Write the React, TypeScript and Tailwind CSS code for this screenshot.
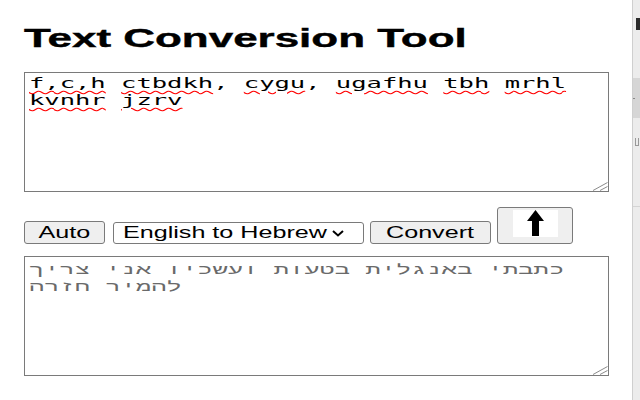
import React from "react";

const sans = "font-['Liberation_Sans',Arial,sans-serif]";

function Grip() {
  return (
    <svg className="absolute right-0 bottom-0" width="16" height="10" viewBox="0 0 16 10">
      <line x1="1" y1="9.5" x2="15.5" y2="1.5" stroke="#8a8a8a" strokeWidth="1" />
      <line x1="8" y1="9.5" x2="15.5" y2="5.5" stroke="#8a8a8a" strokeWidth="1" />
    </svg>
  );
}

function Word({ children }: { children: React.ReactNode }) {
  return (
    <span className="underline decoration-wavy decoration-[#ff0000] decoration-1 underline-offset-[2px]">
      {children}
    </span>
  );
}

export default function App() {
  return (
    <div className="flex h-[400px] w-[640px] overflow-hidden bg-white">
      <main className="w-[632px] pl-6">
        <h1 className={`mt-[25px] h-[26px] text-[26px] leading-[26px] font-bold text-black ${sans}`}>
          <span className="inline-block origin-left scale-x-[1.69] whitespace-nowrap [-webkit-text-stroke:0.4px_#000]">
            Text Conversion Tool
          </span>
        </h1>

        <div className="relative mt-[21px] h-[120px] w-[585px] border border-[#7a7a7a] pl-[4px] pt-[2px] font-['DejaVu_Sans_Mono',monospace] text-[14px] leading-[17px] text-black">
          <div className="w-max origin-left scale-x-[1.82] whitespace-pre">
            <Word>f,c,h</Word> <Word>ctbdkh</Word>, <Word>cygu</Word>, <Word>ugafhu</Word> <Word>tbh</Word>{" "}
            <Word>mrhl</Word>
          </div>
          <div className="w-max origin-left scale-x-[1.82] whitespace-pre">
            <Word>kvnhr</Word> <Word>jzrv</Word>
          </div>
          <Grip />
        </div>

        <div className={`mt-[15px] flex h-[37px] items-end text-[16px] leading-[18px] text-black ${sans}`}>
          <div className="flex h-[23px] w-[81px] items-center justify-center rounded-[3px] border border-[#7a7a7a] bg-[#efefef]">
            <span className="inline-block scale-x-[1.57]">Auto</span>
          </div>
          <div className="ml-[8px] flex h-[22px] w-[251px] items-center rounded-[3px] border border-[#7a7a7a] bg-white pl-[9px]">
            <span className="inline-block origin-left scale-x-[1.57] whitespace-nowrap">English to Hebrew</span>
            <svg className="ml-auto mr-[19px]" width="12" height="7" viewBox="0 0 12 7">
              <polyline points="1,1 6,5.5 11,1" fill="none" stroke="#000" strokeWidth="2" />
            </svg>
          </div>
          <div className="ml-[6px] flex h-[23px] w-[121px] items-center justify-center rounded-[3px] border border-[#7a7a7a] bg-[#efefef]">
            <span className="inline-block scale-x-[1.57]">Convert</span>
          </div>
          <div className="ml-[6px] flex h-[37px] w-[76px] justify-center rounded-[3px] border border-[#7a7a7a] bg-[#efefef] pt-[2px]">
            <div className="h-[27px] w-[45px] bg-white">
              <svg width="45" height="27" viewBox="0 0 45 27">
                <path d="M22.5 0 L31 11 L26 11 L26 26 L19 26 L19 11 L14 11 Z" fill="#000" />
              </svg>
            </div>
          </div>
        </div>

        <div className="relative mt-[12px] h-[120px] w-[585px] border border-[#7a7a7a] pl-[4px] pt-[5px] font-['Liberation_Mono','DejaVu_Sans_Mono',monospace] text-[14px] leading-[17px] text-[#6a6a6a]">
          <div dir="rtl" className="w-max origin-left scale-x-[1.82] whitespace-pre">
            כתבתי באנגלית בטעות ועשכיו אני צריך
          </div>
          <div dir="rtl" className="w-max origin-left scale-x-[1.82] whitespace-pre">
            להמיר חזרה
          </div>
          <Grip />
        </div>
      </main>

      <aside className="flex w-[8px] flex-col border-l border-[#cfcfcf] bg-[#ececec]">
        <div className="h-[18px]" />
        <div className="ml-[3px] h-[12px] bg-[#2a2a2a]" />
        <div className="h-[48px]" />
        <div className="flex h-[40px] items-center bg-[#d6d6d6]">
          <div className="h-[1px] w-[2px] bg-[#888]" />
        </div>
        <div className="h-[20px]" />
        <div className="ml-[2px] h-[8px] w-[4px] border border-t-0 border-[#999]" />
        <div className="h-[60px]" />
        <div className="h-[1px] bg-[#d4d4d4]" />
      </aside>
    </div>
  );
}
